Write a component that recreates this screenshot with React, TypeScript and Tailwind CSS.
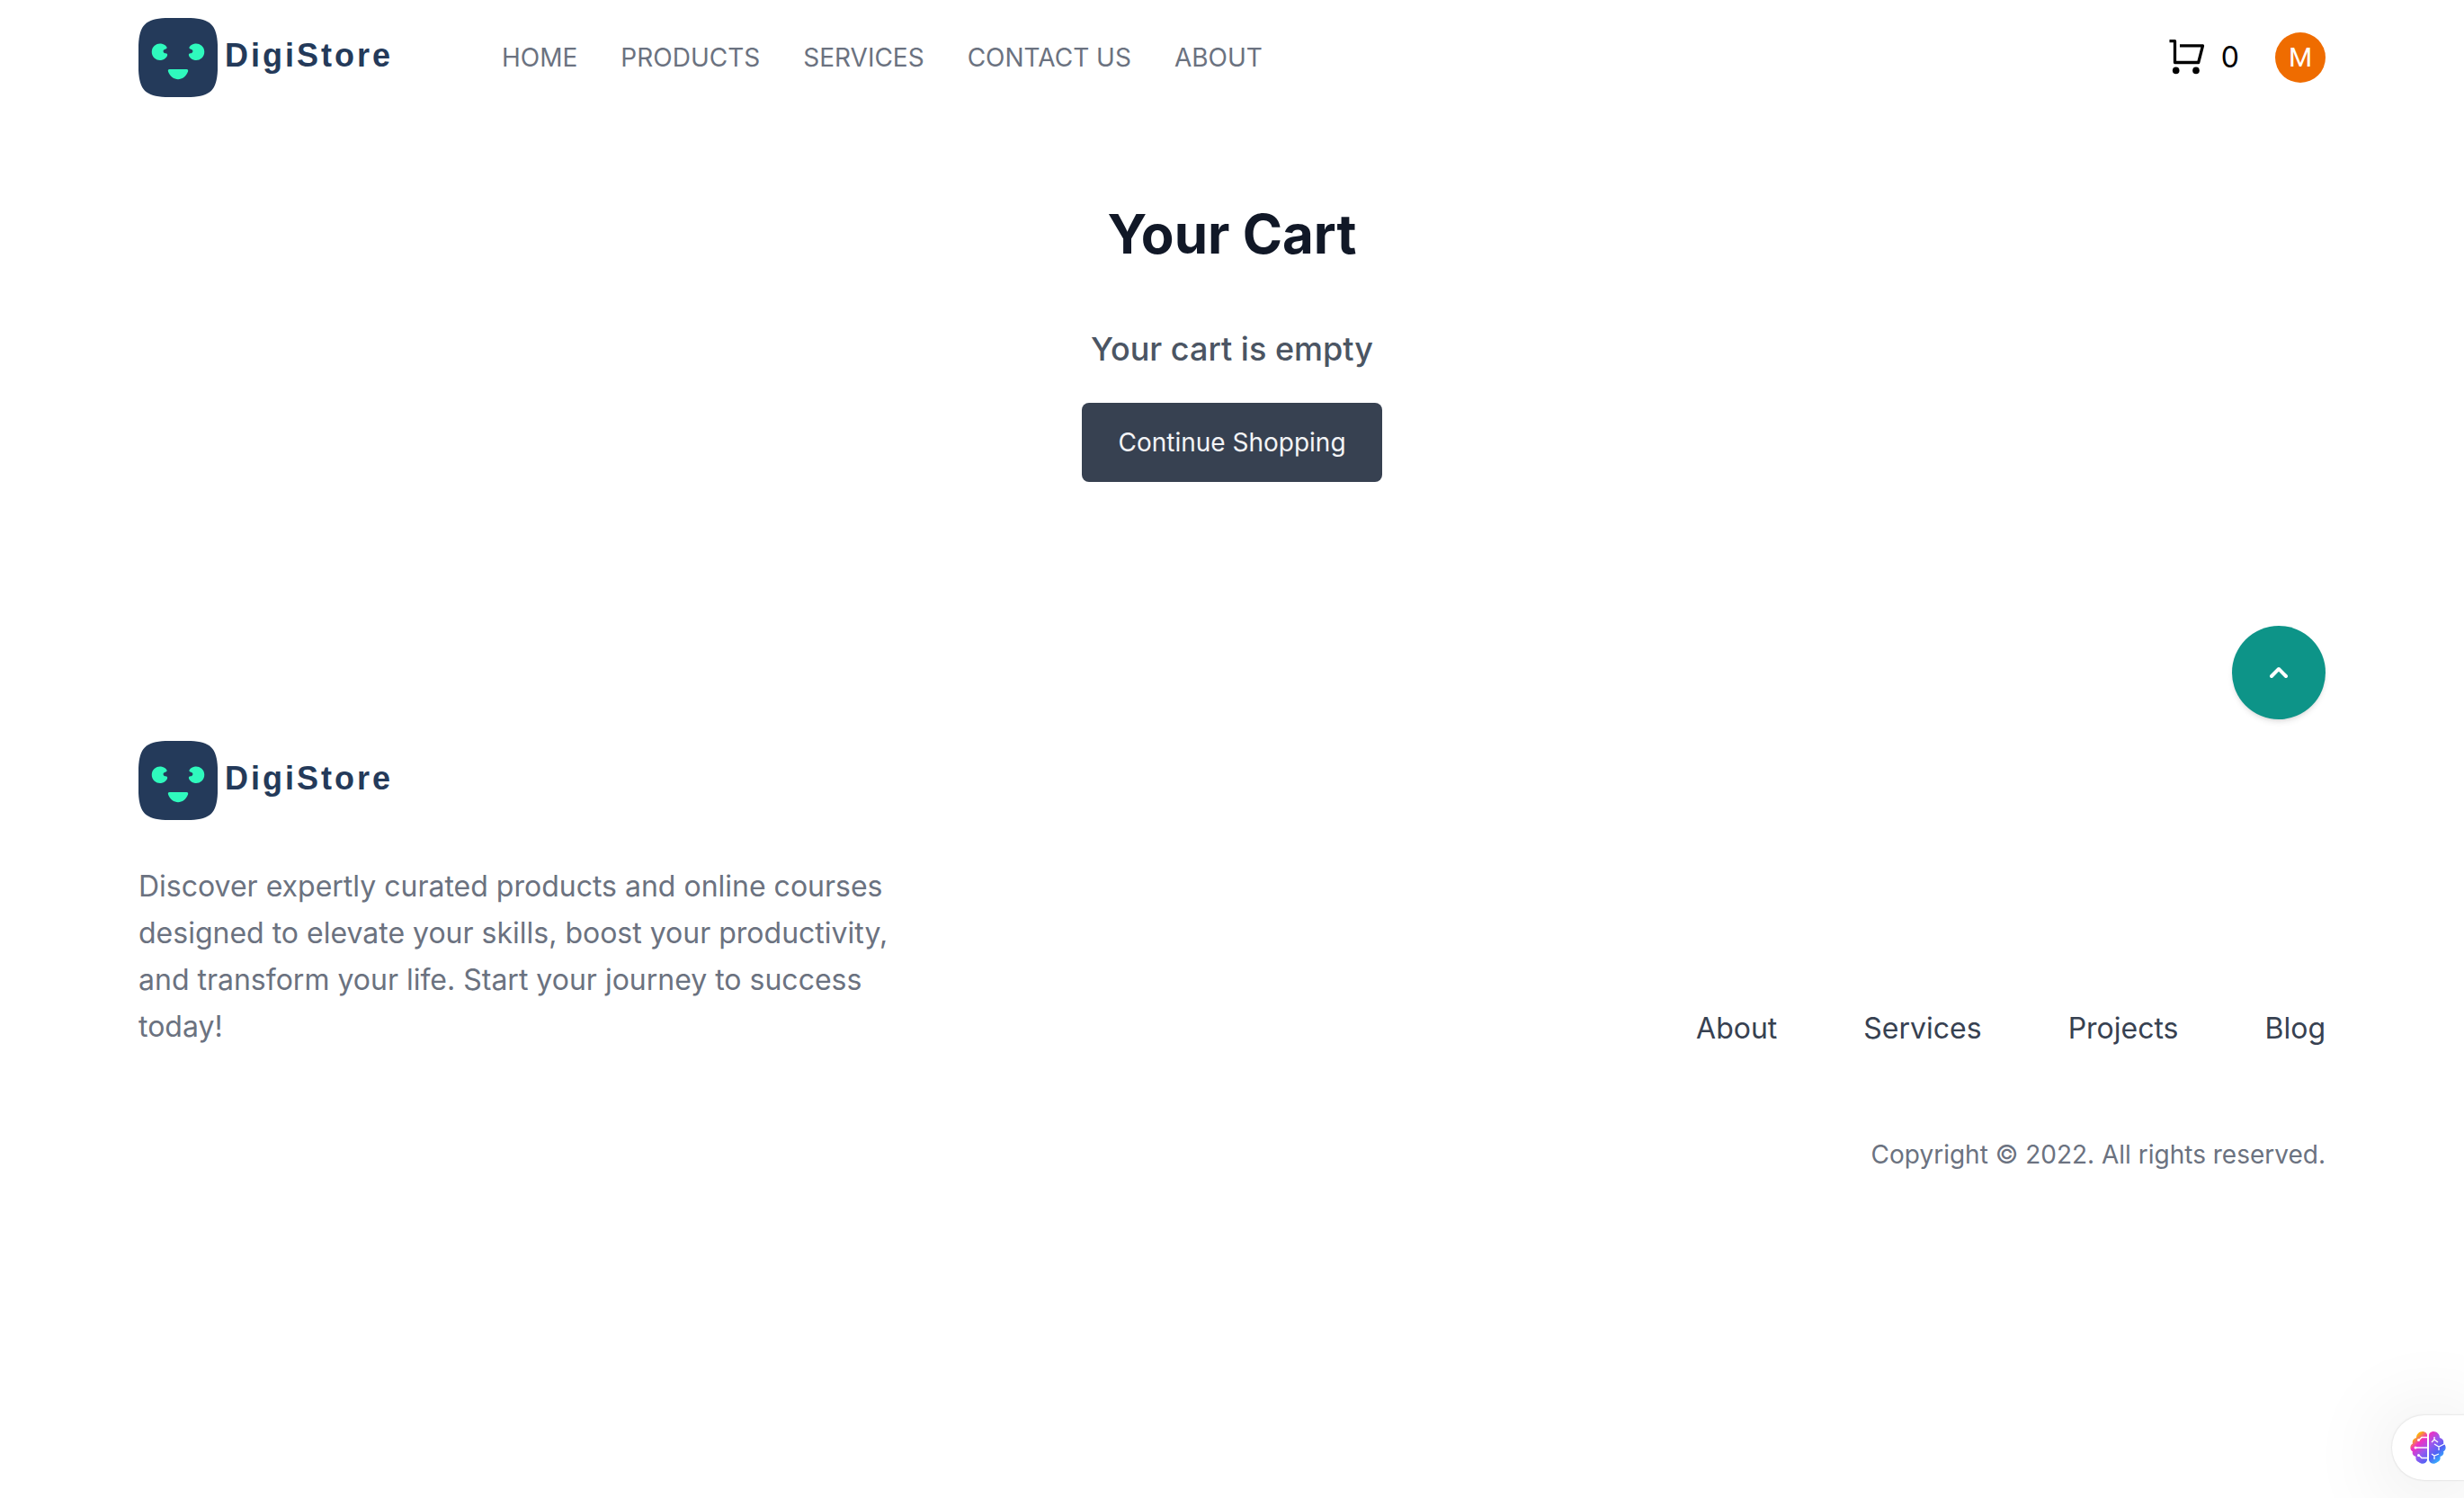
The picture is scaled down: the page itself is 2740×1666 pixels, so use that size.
const navLinks = ["HOME", "PRODUCTS", "SERVICES", "CONTACT US", "ABOUT"];
const footerLinks = ["About", "Services", "Projects", "Blog"];

function Logo() {
  return (
    <a href="#" className="flex items-center gap-2 text-[#243a5a]">
      <svg viewBox="0 0 88 88" className="size-22" aria-hidden="true">
        <path
          d="M30 0H58C80 1 87 8 88 30V58C87 80 80 87 58 88H30C8 87 1 80 0 58V30C1 8 8 1 30 0Z"
          fill="#243a5a"
        />
        <g fill="#2ff9bd">
          <path d="M31.500 32.500A9.200 9.200 0 1 0 31.500 43C32.500 41.500 32.500 39.500 30.500 39.300C27.500 39.500 26.500 36 29 35C31 34.500 32 33.800 31.500 32.500Z" />
          <path d="M56.500 32.500A9.200 9.200 0 1 1 56.500 43C55.500 41.500 55.500 39.500 57.500 39.300C60.500 39.500 61.500 36 59 35C57 34.500 56 33.800 56.500 32.500Z" />
          <path d="M34.500 57H53.500C55 57 55.500 58 55 59.500C51 71 37 71 33 59.500C32.500 58 33 57 34.500 57Z" />
        </g>
      </svg>
      <span className="pb-1 font-['Liberation_Sans',sans-serif] text-[36px] leading-10 font-bold tracking-[3px]">
        DigiStore
      </span>
    </a>
  );
}

function CartIcon() {
  return (
    <svg viewBox="0 0 44 40" className="h-10 w-11" aria-hidden="true">
      <path
        d="M2.500 1.700H8.500V25.500H34.700L39.500 6.800H14"
        fill="none"
        stroke="#000"
        strokeWidth="3.300"
        strokeLinejoin="round"
      />
      <circle cx="9.700" cy="34.400" r="3.800" />
      <circle cx="32" cy="34.400" r="3.800" />
    </svg>
  );
}

function BrainIcon() {
  return (
    <svg viewBox="0 0 40 36" className="h-9 w-10" aria-hidden="true">
      <defs>
        <linearGradient id="brain" x1="0" y1="0" x2="1" y2="1">
          <stop offset="0.160" stopColor="#fbb110" />
          <stop offset="0.300" stopColor="#f02fc2" />
          <stop offset="0.500" stopColor="#9a58ee" />
          <stop offset="0.700" stopColor="#4f63f5" />
          <stop offset="0.900" stopColor="#2fc0ff" />
        </linearGradient>
      </defs>
      <path
        d="M19 4V32C18 36 13 37 9.500 34C7 33 6 31 6.500 28C3 27 2 24 3 22.500C-1 20 0 15 3 13.500C2 10 4 8 7 7C7 2 12 -1 16 0.500C18 1 19 2.500 19 4ZM21 4V32C22 36 27 37 30.500 34C33 33 34 31 33.500 28C37 27 38 24 37 22.500C41 20 40 15 37 13.500C38 10 36 8 33 7C33 2 28 -1 24 0.500C22 1 21 2.500 21 4Z"
        fill="url(#brain)"
      />
      <g fill="none" stroke="#fff" strokeWidth="1.300">
        <path d="M19 6.500H13L10 9.500M19 18H6M19 29.500H13L10 26.500M27 6V9L24 12M27 9L31 12M27 14L32 17L38 14M32 17V21M24 25L27 27L32 25M27 27V31" />
      </g>
      <g fill="#fff">
        <circle cx="9.500" cy="9.500" r="1.500" />
        <circle cx="6" cy="18" r="1.500" />
        <circle cx="9.500" cy="26.500" r="1.500" />
      </g>
    </svg>
  );
}

export default function App() {
  return (
    <div className="min-h-screen overflow-x-hidden bg-white font-[Inter,sans-serif] text-[28px] leading-10 text-[#6b7280]">
      <header className="mx-auto flex h-32 max-w-[2560px] items-center justify-between px-16">
        <div className="flex items-center gap-[121px]">
          <Logo />
          <nav aria-label="Main" className="flex gap-12">
            {navLinks.map((label) => (
              <a key={label} href="#">
                {label}
              </a>
            ))}
          </nav>
        </div>
        <div className="flex items-center gap-10">
          <button type="button" aria-label="Cart, 0 items" className="flex items-center gap-4 text-[32px] text-black">
            <CartIcon />
            <span>0</span>
          </button>
          <button
            type="button"
            aria-label="Account"
            className="grid size-14 place-items-center rounded-full bg-[#ef6c00] font-[Roboto,sans-serif] text-[30px] text-white"
          >
            M
          </button>
        </div>
      </header>

      <main className="flex flex-col items-center px-16 pt-24">
        <h1 className="text-[60px] leading-[72px] font-bold text-[#111827]">Your Cart</h1>
        <p className="mt-16 text-[36px] leading-14 font-medium text-[#4b5563]">Your cart is empty</p>
        <a href="#" className="mt-8 rounded-lg bg-[#374151] px-10 py-6 text-[#f3f4f6]">
          Continue Shopping
        </a>
      </main>

      <footer className="mx-auto mt-40 max-w-[2560px] px-16">
        <div className="flex justify-end">
          <button
            type="button"
            aria-label="Back to top"
            className="grid size-26 place-items-center rounded-full bg-[#0d9488] text-white shadow-md"
          >
            <svg viewBox="0 0 20 20" className="size-10" fill="currentColor" aria-hidden="true">
              <path
                fillRule="evenodd"
                d="M14.707 12.707a1 1 0 01-1.414 0L10 9.414l-3.293 3.293a1 1 0 01-1.414-1.414l4-4a1 1 0 011.414 0l4 4a1 1 0 010 1.414z"
                clipRule="evenodd"
              />
            </svg>
          </button>
        </div>
        <div className="mt-6 flex items-end justify-between">
          <div>
            <Logo />
            <p className="mt-12 max-w-4xl text-[32px] leading-[52px]">
              Discover expertly curated products and online courses designed to elevate your skills, boost your
              productivity, and transform your life. Start your journey to success today!
            </p>
          </div>
          <nav aria-label="Footer" className="flex gap-24 text-[32px] leading-12 text-[#374151]">
            {footerLinks.map((label) => (
              <a key={label} href="#">
                {label}
              </a>
            ))}
          </nav>
        </div>
        <p className="mt-24 text-right">Copyright © 2022. All rights reserved.</p>
      </footer>

      <button
        type="button"
        aria-label="Open assistant"
        className="fixed right-0 bottom-5 flex h-18 w-20 items-center rounded-l-full bg-white pl-5 shadow-[0_0_2px_1px_rgba(0,0,0,0.08),0_8px_100px_rgba(0,0,0,0.14)]"
      >
        <BrainIcon />
      </button>
    </div>
  );
}
